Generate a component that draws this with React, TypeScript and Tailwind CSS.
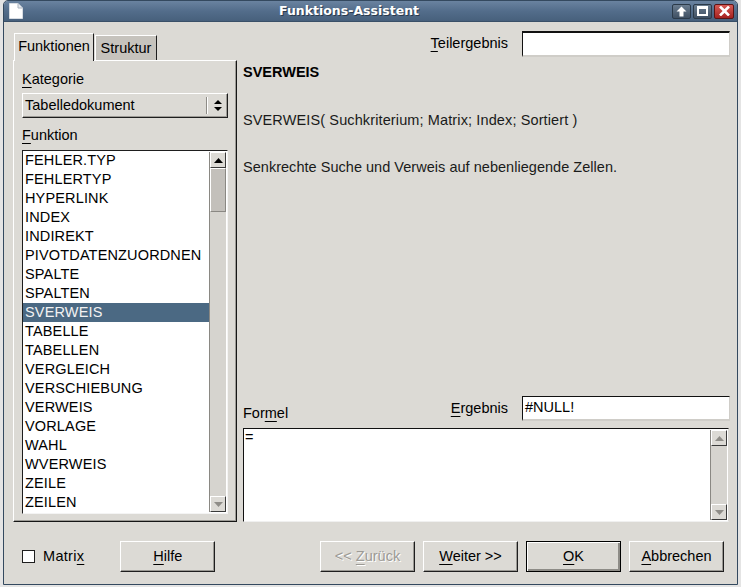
import React from "react";

const FUNCS = [
  "FEHLER.TYP",
  "FEHLERTYP",
  "HYPERLINK",
  "INDEX",
  "INDIREKT",
  "PIVOTDATENZUORDNEN",
  "SPALTE",
  "SPALTEN",
  "SVERWEIS",
  "TABELLE",
  "TABELLEN",
  "VERGLEICH",
  "VERSCHIEBUNG",
  "VERWEIS",
  "VORLAGE",
  "WAHL",
  "WVERWEIS",
  "ZEILE",
  "ZEILEN",
];

const Arrow = ({ up, disabled }: { up?: boolean; disabled?: boolean }) => (
  <svg width="9" height="5" viewBox="0 0 9 5">
    <polygon
      points={up ? "0,5 9,5 4.5,0" : "0,0 9,0 4.5,5"}
      fill={disabled ? "#8f8d88" : "#000"}
    />
  </svg>
);

// vertical scrollbar like the old gtk theme
function ScrollBar({ thumb }: { thumb?: boolean }) {
  return (
    <div className="w-[17px] h-full flex flex-col border-l border-[#8a8883] bg-[#d6d4cf]">
      <div className="h-[16px] flex items-center justify-center bg-[#dcdad5] border border-t-white border-l-white border-r-[#3a3a3a] border-b-[#3a3a3a]">
        <Arrow up disabled={!thumb} />
      </div>
      {thumb && (
        <div className="h-[44px] bg-[#c3c0bb] border border-t-white border-l-white border-r-[#8a8883] border-b-[#8a8883]" />
      )}
      <div className="flex-1" />
      <div className="h-[16px] flex items-center justify-center bg-[#dcdad5] border border-t-white border-l-white border-r-[#3a3a3a] border-b-[#3a3a3a]">
        <Arrow disabled />
      </div>
    </div>
  );
}

function Btn({
  children,
  disabled,
  def,
}: {
  children: React.ReactNode;
  disabled?: boolean;
  def?: boolean;
}) {
  return (
    <button
      className={
        def
          ? "h-[31px] w-[95px] bg-[#dcdad5] border border-black shadow-[inset_1px_1px_0_#fff,inset_-2px_-2px_0_#8e8c87] text-[14.5px] text-black"
          : "h-[31px] w-[95px] bg-[#dcdad5] border border-t-white border-l-white border-r-[#1e1e1e] border-b-[#1e1e1e] shadow-[inset_-1px_-1px_0_#9a9893] text-[14.5px] " +
            (disabled ? "text-[#9c9a95] [text-shadow:1px_1px_0_#fff]" : "text-black")
      }
    >
      {children}
    </button>
  );
}

const U = ({ children }: { children: React.ReactNode }) => (
  <span className="underline underline-offset-[3px] decoration-1">{children}</span>
);

export default function App() {
  return (
    <div className="w-[741px] h-[587px] bg-[#e4e4e4] font-['Liberation_Sans',Arial,sans-serif] text-black overflow-hidden">
      <div className="ml-[3px] w-[735px] h-[585px] flex flex-col rounded-t-[5px] border border-[#34495f] bg-[#dcdad5] overflow-hidden">
        {/* title bar */}
        <div className="h-[21px] flex items-center bg-gradient-to-b from-[#6a83a0] via-[#536d8b] to-[#47607c] border-b border-[#3a5068]">
          <svg width="14" height="16" viewBox="0 0 14 16" className="ml-[5px]">
            <path d="M0.5 0.5 H9 L13.5 5 V15.5 H0.5 Z" fill="#fff" stroke="#d8dde3" />
            <path d="M9 0.5 V5 H13.5" fill="#e6e9ed" stroke="#aab4c0" />
          </svg>
          <span className="ml-[256px] font-['DejaVu_Sans',sans-serif] font-bold text-[12.5px] text-white [text-shadow:1px_1px_0_#2a3a4c]">
            Funktions-Assistent
          </span>
          <div className="ml-auto mr-[3px] flex gap-[2px]">
            <div className="w-[19px] h-[15px] rounded-[2px] border border-[#2b3a49] bg-gradient-to-b from-[#6b7d90] to-[#3f5063] flex items-center justify-center">
              <svg width="11" height="11" viewBox="0 0 11 11">
                <path d="M5.5 0.5 L10.5 5.5 H7.5 V10.5 H3.5 V5.5 H0.5 Z" fill="#fff" />
              </svg>
            </div>
            <div className="w-[19px] h-[15px] rounded-[2px] border border-[#2b3a49] bg-gradient-to-b from-[#6b7d90] to-[#3f5063] flex items-center justify-center">
              <div className="w-[11px] h-[10px] border-2 border-white border-t-[3px]" />
            </div>
            <div className="w-[20px] h-[15px] rounded-[2px] border border-[#5c1414] bg-gradient-to-b from-[#d65a55] to-[#a5201f] flex items-center justify-center">
              <svg width="11" height="10" viewBox="0 0 11 10">
                <path d="M1 0.5 L10 9.5 M10 0.5 L1 9.5" stroke="#fff" strokeWidth="2.6" />
              </svg>
            </div>
          </div>
        </div>

        {/* body */}
        <div className="flex-1 flex flex-col pl-[9px] pr-[7px] pt-[9px] text-[14.5px]">
          <div className="h-[491px] flex">
            {/* left column */}
            <div className="w-[224px] flex flex-col">
              <div className="h-[28px] mt-[2px] flex items-end">
                <div className="ml-[1px] w-[80px] h-[28px] bg-[#dcdad5] border-l border-t border-white border-r border-r-[#1e1e1e] relative z-10 flex items-center justify-center pb-[1px]">
                  Funktionen
                </div>
                <div className="ml-[1px] w-[62px] h-[26px] bg-[#c6c3bd] border-l border-t border-white border-r border-r-[#1e1e1e] flex items-center justify-center">
                  Struktur
                </div>
              </div>
              <div className="flex-1 -mt-[1px] border border-t-white border-l-white border-r-[#161616] border-b-[#161616] shadow-[inset_-1px_-1px_0_#9d9b96] px-[8px] pt-[9px] pb-[7px] flex flex-col">
                <div className="h-[18px] leading-[18px]">
                  <U>K</U>ategorie
                </div>
                <div className="mt-[5px] h-[25px] flex items-center bg-[#dcdad5] border border-t-white border-l-white border-r-[#1e1e1e] border-b-[#1e1e1e] shadow-[inset_-1px_-1px_0_#9d9b96]">
                  <span className="ml-[2px] flex-1">Tabelledokument</span>
                  <div className="w-px h-[17px] bg-[#8e8c87]" />
                  <div className="w-px h-[17px] bg-white" />
                  <div className="w-[19px] flex flex-col items-center gap-[3px]">
                    <svg width="8" height="4" viewBox="0 0 8 4">
                      <polygon points="0,4 8,4 4,0" fill="#000" />
                    </svg>
                    <svg width="8" height="4" viewBox="0 0 8 4">
                      <polygon points="0,0 8,0 4,4" fill="#000" />
                    </svg>
                  </div>
                </div>
                <div className="mt-[8px] h-[18px] leading-[18px]">
                  <U>F</U>unktion
                </div>
                <div className="mt-[6px] flex-1 flex bg-white border border-t-[#1e1e1e] border-l-[#1e1e1e] border-r-[#f4f4f4] border-b-[#f4f4f4]">
                  <div className="flex-1 flex flex-col">
                    {FUNCS.map((f) => (
                      <div
                        key={f}
                        className={
                          "h-[19px] leading-[19px] pl-[2px] tracking-[0.15px] " +
                          (f === "SVERWEIS" ? "bg-[#4b6983] text-[#f2f2f2]" : "")
                        }
                      >
                        {f}
                      </div>
                    ))}
                  </div>
                  <div className="py-[1px] pr-[1px]">
                    <ScrollBar thumb />
                  </div>
                </div>
              </div>
            </div>

            {/* right column */}
            <div className="ml-[6px] w-[487px] flex flex-col">
              <div className="h-[26px] flex items-center justify-end">
                <span className="mr-[14px]">
                  <U>T</U>eilergebnis
                </span>
                <div className="w-[208px] h-[26px] bg-white border border-t-2 border-t-[#111] border-l-[#111] border-r-[#cfcdc8] border-b-[#cfcdc8] border-b-2" />
              </div>
              <div className="mt-[7px] h-[17px] leading-[17px] font-bold">SVERWEIS</div>
              <div className="mt-[31px] h-[17px] leading-[17px] text-[#1a1a1a] tracking-[0.12px]">
                SVERWEIS( Suchkriterium; Matrix; Index; Sortiert )
              </div>
              <div className="mt-[30px] h-[17px] leading-[17px] text-[#1a1a1a] tracking-[0.03px]">
                Senkrechte Suche und Verweis auf nebenliegende Zellen.
              </div>
              <div className="flex-1" />
              <div className="h-[25px] flex items-center">
                <span className="self-end leading-[17px] -mb-[1px]">
                  For<U>m</U>el
                </span>
                <span className="ml-auto mr-[14px]">
                  <U>E</U>rgebnis
                </span>
                <div className="w-[208px] h-[25px] bg-white border border-[#111] border-r-[#cfcdc8] border-b-[#cfcdc8] border-b-2 flex items-center pl-[2px]">
                  #NULL!
                </div>
              </div>
              <div className="mt-[7px] h-[94px] mr-[1px] flex bg-white border border-[#111] border-r-[#dcdad5] border-b-[#f0f0f0]">
                <div className="flex-1 pl-[1px] leading-[17px]">=</div>
                <div className="py-[1px] pr-[1px]">
                  <ScrollBar />
                </div>
              </div>
            </div>
          </div>

          {/* buttons */}
          <div className="mt-[19px] h-[31px] flex items-center">
            <div className="ml-[9px] w-[13px] h-[13px] bg-white border border-[#1e1e1e]" />
            <span className="ml-[8px] tracking-[0.3px]">
              Matri<U>x</U>
            </span>
            <div className="ml-[36px]">
              <Btn>
                <U>H</U>ilfe
              </Btn>
            </div>
            <div className="ml-auto mr-[6px] flex gap-[8px]">
              <Btn disabled>
                &lt;&lt; <U>Z</U>urück
              </Btn>
              <Btn>
                <U>W</U>eiter &gt;&gt;
              </Btn>
              <Btn def>
                <U>O</U>K
              </Btn>
              <Btn>
                <U>A</U>bbrechen
              </Btn>
            </div>
          </div>
        </div>
      </div>
    </div>
  );
}
